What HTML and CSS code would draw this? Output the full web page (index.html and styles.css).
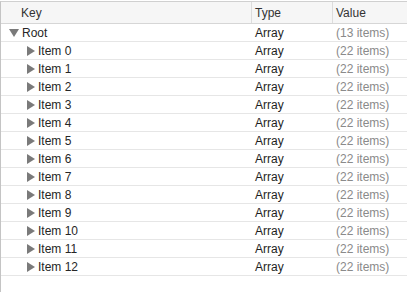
FILE: index.html
```html
<!DOCTYPE html>
<html>
<head>
<meta charset="utf-8">
<link rel="stylesheet" href="styles.css">
</head>
<body>
<div class="table">
  <div class="header">
    <div class="hcell key">Key</div>
    <div class="hcell type">Type</div>
    <div class="hcell value">Value</div>
  </div>
  <div class="row">
    <div class="cell key root"><span class="tri down"></span>Root</div>
    <div class="cell type">Array</div>
    <div class="cell value">(13 items)</div>
  </div>
  <div class="row"><div class="cell key item"><span class="tri right"></span>Item 0</div><div class="cell type">Array</div><div class="cell value">(22 items)</div></div>
  <div class="row"><div class="cell key item"><span class="tri right"></span>Item 1</div><div class="cell type">Array</div><div class="cell value">(22 items)</div></div>
  <div class="row"><div class="cell key item"><span class="tri right"></span>Item 2</div><div class="cell type">Array</div><div class="cell value">(22 items)</div></div>
  <div class="row"><div class="cell key item"><span class="tri right"></span>Item 3</div><div class="cell type">Array</div><div class="cell value">(22 items)</div></div>
  <div class="row"><div class="cell key item"><span class="tri right"></span>Item 4</div><div class="cell type">Array</div><div class="cell value">(22 items)</div></div>
  <div class="row"><div class="cell key item"><span class="tri right"></span>Item 5</div><div class="cell type">Array</div><div class="cell value">(22 items)</div></div>
  <div class="row"><div class="cell key item"><span class="tri right"></span>Item 6</div><div class="cell type">Array</div><div class="cell value">(22 items)</div></div>
  <div class="row"><div class="cell key item"><span class="tri right"></span>Item 7</div><div class="cell type">Array</div><div class="cell value">(22 items)</div></div>
  <div class="row"><div class="cell key item"><span class="tri right"></span>Item 8</div><div class="cell type">Array</div><div class="cell value">(22 items)</div></div>
  <div class="row"><div class="cell key item"><span class="tri right"></span>Item 9</div><div class="cell type">Array</div><div class="cell value">(22 items)</div></div>
  <div class="row"><div class="cell key item"><span class="tri right"></span>Item 10</div><div class="cell type">Array</div><div class="cell value">(22 items)</div></div>
  <div class="row"><div class="cell key item"><span class="tri right"></span>Item 11</div><div class="cell type">Array</div><div class="cell value">(22 items)</div></div>
  <div class="row"><div class="cell key item"><span class="tri right"></span>Item 12</div><div class="cell type">Array</div><div class="cell value">(22 items)</div></div>
</div>
</body>
</html>
```
FILE: styles.css
```css
html, body {
  margin: 0;
  padding: 0;
  background: #ffffff;
}
body {
  font-family: "Liberation Sans", Arial, sans-serif;
  font-size: 12px;
  color: #262626;
}
.table {
  width: 406px;
  height: 291px;
  border-left: 1px solid #c4c4c4;
  border-top: 1px solid #d0d0d0;
  margin-top: 1px;
}
.header {
  display: grid;
  grid-template-columns: 250px 81px 1fr;
  height: 21px;
  background: #f6f6f6;
  border-bottom: 1px solid #d6d6d6;
}
.hcell {
  display: flex;
  align-items: center;
  color: #333;
}
.hcell.key { padding-left: 20px; }
.hcell.type, .hcell.value {
  border-left: 1px solid #dcdcdc;
  padding-left: 3px;
}
.row {
  display: grid;
  grid-template-columns: 250px 81px 1fr;
  height: 17px;
  border-bottom: 1px solid #e6e6e6;
}
.cell {
  display: flex;
  align-items: center;
}
.cell.type { padding-left: 4px; color: #1e1e1e; }
.cell.value { padding-left: 4px; color: #8a8a8a; }
.cell.root { padding-left: 8px; }
.cell.item { padding-left: 25px; }
.tri {
  display: inline-block;
  width: 0;
  height: 0;
  margin-right: 3px;
}
.tri.down {
  border-left: 5px solid transparent;
  border-right: 5px solid transparent;
  border-top: 8px solid #7a7a7a;
}
.tri.right {
  border-top: 5px solid transparent;
  border-bottom: 5px solid transparent;
  border-left: 8px solid #7a7a7a;
  margin-left: 1px;
}
```
